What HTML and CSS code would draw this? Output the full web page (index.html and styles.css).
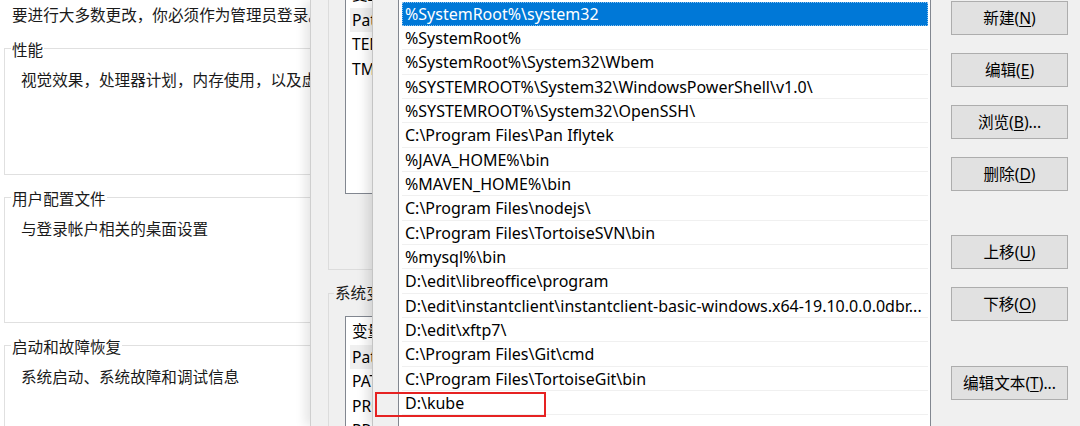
FILE: index.html
```html
<!DOCTYPE html>
<html lang="zh-CN">
<head>
<meta charset="utf-8">
<title>环境变量</title>
<link rel="stylesheet" href="styles.css">
</head>
<body>
<div class="desk">
  <section class="win back">
    <p class="notice">要进行大多数更改，你必须作为管理员登录。</p>
    <div class="group">
      <div class="gtitle">性能</div>
      <p class="gdesc">视觉效果，处理器计划，内存使用，以及虚拟内存</p>
    </div>
    <div class="group">
      <div class="gtitle">用户配置文件</div>
      <p class="gdesc">与登录帐户相关的桌面设置</p>
    </div>
    <div class="group">
      <div class="gtitle">启动和故障恢复</div>
      <p class="gdesc">系统启动、系统故障和调试信息</p>
    </div>
  </section>

  <section class="win mid">
    <div class="mgroup ugroup">
      <div class="vlist ulist">
        <div class="vhead">变量</div>
        <div class="vrow sel">Path</div>
        <div class="vrow">TEMP</div>
        <div class="vrow">TMP</div>
      </div>
    </div>
    <div class="mgroup sgroup">
      <div class="mtitle">系统变量(S)</div>
      <div class="vlist slist">
        <div class="vhead">变量</div>
        <div class="vrow sel">Path</div>
        <div class="vrow">PATHEXT</div>
        <div class="vrow">PROCESSOR_ARCHITECTURE</div>
        <div class="vrow">PROCESSOR_IDENTIFIER</div>
      </div>
    </div>
  </section>

  <section class="win front">
    <div class="plist">
      <div class="prow active">%SystemRoot%\system32</div>
      <div class="prow">%SystemRoot%</div>
      <div class="prow">%SystemRoot%\System32\Wbem</div>
      <div class="prow">%SYSTEMROOT%\System32\WindowsPowerShell\v1.0\</div>
      <div class="prow">%SYSTEMROOT%\System32\OpenSSH\</div>
      <div class="prow">C:\Program Files\Pan Iflytek</div>
      <div class="prow">%JAVA_HOME%\bin</div>
      <div class="prow">%MAVEN_HOME%\bin</div>
      <div class="prow">C:\Program Files\nodejs\</div>
      <div class="prow">C:\Program Files\TortoiseSVN\bin</div>
      <div class="prow">%mysql%\bin</div>
      <div class="prow">D:\edit\libreoffice\program</div>
      <div class="prow">D:\edit\instantclient\instantclient-basic-windows.x64-19.10.0.0.0dbr...</div>
      <div class="prow">D:\edit\xftp7\</div>
      <div class="prow">C:\Program Files\Git\cmd</div>
      <div class="prow">C:\Program Files\TortoiseGit\bin</div>
      <div class="prow">D:\kube</div>
      <div class="prow"></div>
    </div>
    <div class="btns">
      <button class="btn">新建(<u>N</u>)</button>
      <button class="btn">编辑(<u>E</u>)</button>
      <button class="btn">浏览(<u>B</u>)...</button>
      <button class="btn">删除(<u>D</u>)</button>
      <button class="btn sep">上移(<u>U</u>)</button>
      <button class="btn">下移(<u>O</u>)</button>
      <button class="btn sep2">编辑文本(<u>T</u>)...</button>
    </div>
  </section>

  <div class="mark"></div>
</div>
</body>
</html>
```
FILE: styles.css
```css
* { box-sizing: border-box; }
html, body { margin: 0; padding: 0; }
body {
  width: 1080px;
  height: 426px;
  overflow: hidden;
  font-family: "Noto Sans", "Noto Sans CJK SC", sans-serif;
  font-size: 15.6px;
  color: #1a1a1a;
  background: #f0f0f0;
}
.desk {
  position: relative;
  width: 1080px;
  height: 426px;
  overflow: hidden;
}
.win {
  position: absolute;
  top: 0;
  height: 426px;
  overflow: hidden;
}

/* back window */
.back {
  left: 0;
  width: 420px;
  background: #ffffff;
  padding: 4px 0 0 0;
  font-family: "Noto Sans CJK SC", sans-serif;
}
.notice {
  margin: 0 0 0 12px;
  line-height: 20px;
  white-space: nowrap;
}
.group {
  margin: 24px 0 0 4px;
  width: 460px;
  height: 127px;
  border: 1px solid #e0e0e0;
}
.group + .group {
  margin-top: 22px;
  height: 126px;
}
.gtitle {
  width: fit-content;
  margin: -10px 0 0 6px;
  padding: 0 1px;
  line-height: 20px;
  background: #ffffff;
  white-space: nowrap;
}
.gdesc {
  margin: 10px 0 0 16px;
  line-height: 20px;
  white-space: nowrap;
}

/* middle window */
.mid {
  left: 310px;
  width: 300px;
  background: #f0f0f0;
  border-left: 1px solid #cfcfcf;
  box-shadow: -5px 0 10px rgba(0, 0, 0, 0.10);
}
.mgroup {
  margin-left: 17px;
  width: 260px;
  border: 1px solid #dcdcdc;
}
.ugroup {
  margin-top: -40px;
  height: 310px;
  padding: 18px 0 0 16px;
}
.sgroup {
  margin-top: 23px;
  height: 200px;
  padding: 0 0 0 16px;
}
.mtitle {
  width: fit-content;
  margin: -12px 0 0 -11px;
  padding: 0 1px;
  line-height: 20px;
  background: #f0f0f0;
  white-space: nowrap;
  font-family: "Noto Sans CJK SC", sans-serif;
}
.vlist {
  width: 220px;
  background: #ffffff;
  border: 1px solid #828790;
  color: #000;
}
.ulist {
  margin-top: 0;
  height: 215px;
}
.slist {
  margin-top: 14px;
  height: 140px;
}
.vhead {
  height: 27.5px;
  line-height: 27.5px;
  padding-left: 6px;
  font-family: "Noto Sans CJK SC", sans-serif;
  white-space: nowrap;
}
.vrow {
  height: 24.5px;
  line-height: 24.5px;
  padding-left: 6px;
  white-space: nowrap;
  margin-left: 4px;
  text-indent: -4px;
}
.vrow.sel {
  background: #f0f0f0;
}

/* front window */
.front {
  left: 372px;
  right: 0;
  display: flex;
  align-items: flex-start;
  background: #f0f0f0;
  border-left: 1px solid #c4c4c4;
  box-shadow: -5px 0 10px rgba(0, 0, 0, 0.12);
  padding-left: 25px;
}
.plist {
  flex: none;
  width: 533px;
  height: 440px;
  margin-top: -1px;
  padding: 1.7px 2px 0 3px;
  background: #ffffff;
  border: 1px solid #828790;
  color: #000;
  font-size: 16px;
}
.prow {
  height: 24.33px;
  line-height: 25px;
  padding-left: 3px;
  border-bottom: 1px solid #f0f0f0;
  white-space: nowrap;
  overflow: hidden;
}
.prow.active {
  background: #0078d7;
  color: #ffffff;
  outline: 1px dotted rgba(255, 255, 255, 0.55);
  outline-offset: -1px;
  border-bottom-color: #0078d7;
}
.btns {
  flex: none;
  display: flex;
  flex-direction: column;
  margin-left: 20px;
  padding-top: 1px;
}
.btn {
  width: 117px;
  height: 34px;
  padding: 0;
  background: #e1e1e1;
  border: 1px solid #adadad;
  border-radius: 0;
  font-family: "Noto Sans", "Noto Sans CJK SC", sans-serif;
  font-size: 15.6px;
  color: #000;
  line-height: 32px;
  text-align: center;
}
.btn + .btn { margin-top: 18px; }
.btn.sep { margin-top: 44px; }
.btn.sep2 { margin-top: 45px; }
.btn u { text-underline-offset: 2px; }

/* annotation */
.mark {
  position: absolute;
  left: 375px;
  top: 392px;
  width: 171px;
  height: 25px;
  border: 2px solid #e62222;
}
```
